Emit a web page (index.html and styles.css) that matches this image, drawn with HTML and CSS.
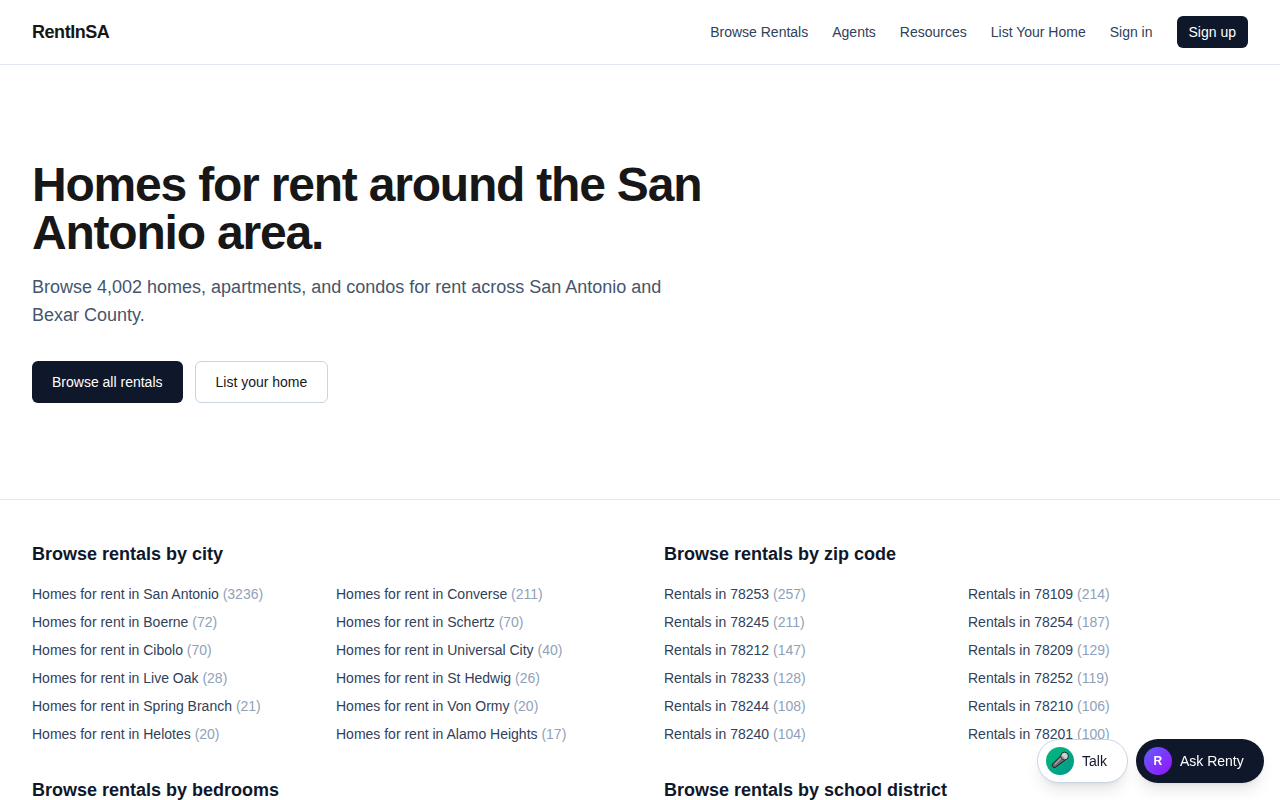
FILE: index.html
```html
<!DOCTYPE html>
<html lang="en">
<head>
  <meta charset="UTF-8" />
  <meta name="viewport" content="width=device-width, initial-scale=1.0" />
  <title>RentInSA</title>
  <link rel="stylesheet" href="styles.css">
</head>
<body>
  <header class="header">
    <a class="logo" href="#">RentInSA</a>
    <nav class="nav">
      <a href="#">Browse Rentals</a>
      <a href="#">Agents</a>
      <a href="#">Resources</a>
      <a href="#">List Your Home</a>
      <a href="#">Sign in</a>
      <a class="signup" href="#">Sign up</a>
    </nav>
  </header>

  <main>
    <section class="hero">
      <h1>Homes for rent around the San Antonio area.</h1>
      <p>Browse 4,002 homes, apartments, and condos for rent across San Antonio and Bexar County.</p>
      <div class="actions">
        <a class="btn btn-dark" href="#">Browse all rentals</a>
        <a class="btn btn-light" href="#">List your home</a>
      </div>
    </section>

    <section class="browse">
      <div>
        <h2>Browse rentals by city</h2>
        <ul class="links">
          <li><a href="#">Homes for rent in San Antonio <span>(3236)</span></a></li>
          <li><a href="#">Homes for rent in Converse <span>(211)</span></a></li>
          <li><a href="#">Homes for rent in Boerne <span>(72)</span></a></li>
          <li><a href="#">Homes for rent in Schertz <span>(70)</span></a></li>
          <li><a href="#">Homes for rent in Cibolo <span>(70)</span></a></li>
          <li><a href="#">Homes for rent in Universal City <span>(40)</span></a></li>
          <li><a href="#">Homes for rent in Live Oak <span>(28)</span></a></li>
          <li><a href="#">Homes for rent in St Hedwig <span>(26)</span></a></li>
          <li><a href="#">Homes for rent in Spring Branch <span>(21)</span></a></li>
          <li><a href="#">Homes for rent in Von Ormy <span>(20)</span></a></li>
          <li><a href="#">Homes for rent in Helotes <span>(20)</span></a></li>
          <li><a href="#">Homes for rent in Alamo Heights <span>(17)</span></a></li>
        </ul>
      </div>
      <div>
        <h2>Browse rentals by zip code</h2>
        <ul class="links">
          <li><a href="#">Rentals in 78253 <span>(257)</span></a></li>
          <li><a href="#">Rentals in 78109 <span>(214)</span></a></li>
          <li><a href="#">Rentals in 78245 <span>(211)</span></a></li>
          <li><a href="#">Rentals in 78254 <span>(187)</span></a></li>
          <li><a href="#">Rentals in 78212 <span>(147)</span></a></li>
          <li><a href="#">Rentals in 78209 <span>(129)</span></a></li>
          <li><a href="#">Rentals in 78233 <span>(128)</span></a></li>
          <li><a href="#">Rentals in 78252 <span>(119)</span></a></li>
          <li><a href="#">Rentals in 78244 <span>(108)</span></a></li>
          <li><a href="#">Rentals in 78210 <span>(106)</span></a></li>
          <li><a href="#">Rentals in 78240 <span>(104)</span></a></li>
          <li><a href="#">Rentals in 78201 <span>(100)</span></a></li>
        </ul>
      </div>
      <div>
        <h2>Browse rentals by bedrooms</h2>
      </div>
      <div>
        <h2>Browse rentals by school district</h2>
      </div>
    </section>
  </main>

  <div class="chat">
    <button class="pill talk">
      <span class="badge mic">
        <svg width="28" height="28" viewBox="0 0 28 28" stroke="#1a1a1a" stroke-linejoin="round">
          <path d="M15 8.6 6.6 17Q5.6 18.4 6.6 19.6T9.2 20.4L19.2 13Z" fill="#6b6b6b" stroke-width="1" />
          <path d="M15.5 10.8 8.8 17.6" fill="none" stroke="#a5a5a5" stroke-width="1.4" />
          <circle cx="18.6" cy="9" r="3.8" fill="#cfcfcf" stroke-width="0.9" />
          <path d="M15.2 8.8 18.9 12.4" fill="none" stroke="#8a8a8a" stroke-width="1.1" />
        </svg>
      </span>
      Talk
    </button>
    <button class="pill ask"><span class="badge">R</span>Ask Renty</button>
  </div>
</body>
</html>
```
FILE: styles.css
```css
* {
  box-sizing: border-box;
  margin: 0;
  padding: 0;
}
html {
  height: 100%;
  overflow: hidden;
}
body {
  height: 100%;
  overflow: hidden;
  font-family: "Liberation Sans", Arial, sans-serif;
  font-size: 14px;
  line-height: 20px;
  color: #171717;
  background: #fff;
}
a {
  color: inherit;
  text-decoration: none;
}
.header {
  display: flex;
  justify-content: space-between;
  align-items: center;
  height: 65px;
  padding: 0 32px;
  border-bottom: 1px solid #e2e8f0;
}
.logo {
  font-size: 18px;
  line-height: 28px;
  font-weight: 600;
  letter-spacing: -0.025em;
}
.nav {
  display: flex;
  align-items: center;
  gap: 24px;
  color: #314158;
}
.nav .signup {
  padding: 6px 12px;
  border-radius: 6px;
  font-weight: 500;
  color: #fff;
  background: #0f172b;
}
.hero {
  padding: 96px 32px;
}
.hero h1 {
  max-width: 672px;
  font-size: 48px;
  line-height: 48px;
  font-weight: 600;
  letter-spacing: -0.025em;
}
.hero p {
  max-width: 672px;
  margin-top: 16px;
  font-size: 18px;
  line-height: 28px;
  color: #45556c;
}
.actions {
  display: flex;
  gap: 12px;
  margin-top: 32px;
}
.btn {
  padding: 11px 20px;
  border-radius: 6px;
  font-weight: 500;
}
.btn-dark {
  color: #fff;
  background: #0f172b;
}
.btn-light {
  padding: 10px 20px;
  border: 1px solid #cad5e2;
}
.browse {
  display: grid;
  grid-template-columns: 1fr 1fr;
  gap: 32px 48px;
  padding: 40px 32px 0;
  border-top: 1px solid #e2e8f0;
}
.browse h2 {
  font-size: 18px;
  line-height: 28px;
  font-weight: 600;
  color: #0f172b;
}
.links {
  display: grid;
  grid-template-columns: 1fr 1fr;
  gap: 8px 24px;
  margin-top: 16px;
  list-style: none;
  color: #314158;
}
.links span {
  color: #90a1b9;
}

/* floating chat buttons */
.chat {
  position: fixed;
  right: 16px;
  bottom: 17px;
  display: flex;
  align-items: center;
  gap: 8px;
  will-change: transform;
}
.pill {
  display: flex;
  align-items: center;
  gap: 8px;
  height: 44px;
  padding: 8px 20px 8px 8px;
  border: 0;
  border-radius: 999px;
  font: 500 14px/20px "Liberation Sans", Arial, sans-serif;
  box-shadow: 0 10px 15px -3px rgba(0, 0, 0, 0.1), 0 4px 6px -4px rgba(0, 0, 0, 0.1);
  cursor: pointer;
}
.talk {
  border: 1px solid #cad5e2;
  color: #0f172b;
  background: #fff;
}
.ask {
  color: #fff;
  background: #0f172b;
}
.badge {
  display: flex;
  align-items: center;
  justify-content: center;
  flex-shrink: 0;
  width: 28px;
  height: 28px;
  border-radius: 50%;
  font-size: 12px;
  line-height: 16px;
  font-weight: 700;
  color: #fff;
  background: linear-gradient(135deg, #615fff, #9810fa);
}
.mic {
  background: linear-gradient(135deg, #00bc7d, #009689);
}
```
